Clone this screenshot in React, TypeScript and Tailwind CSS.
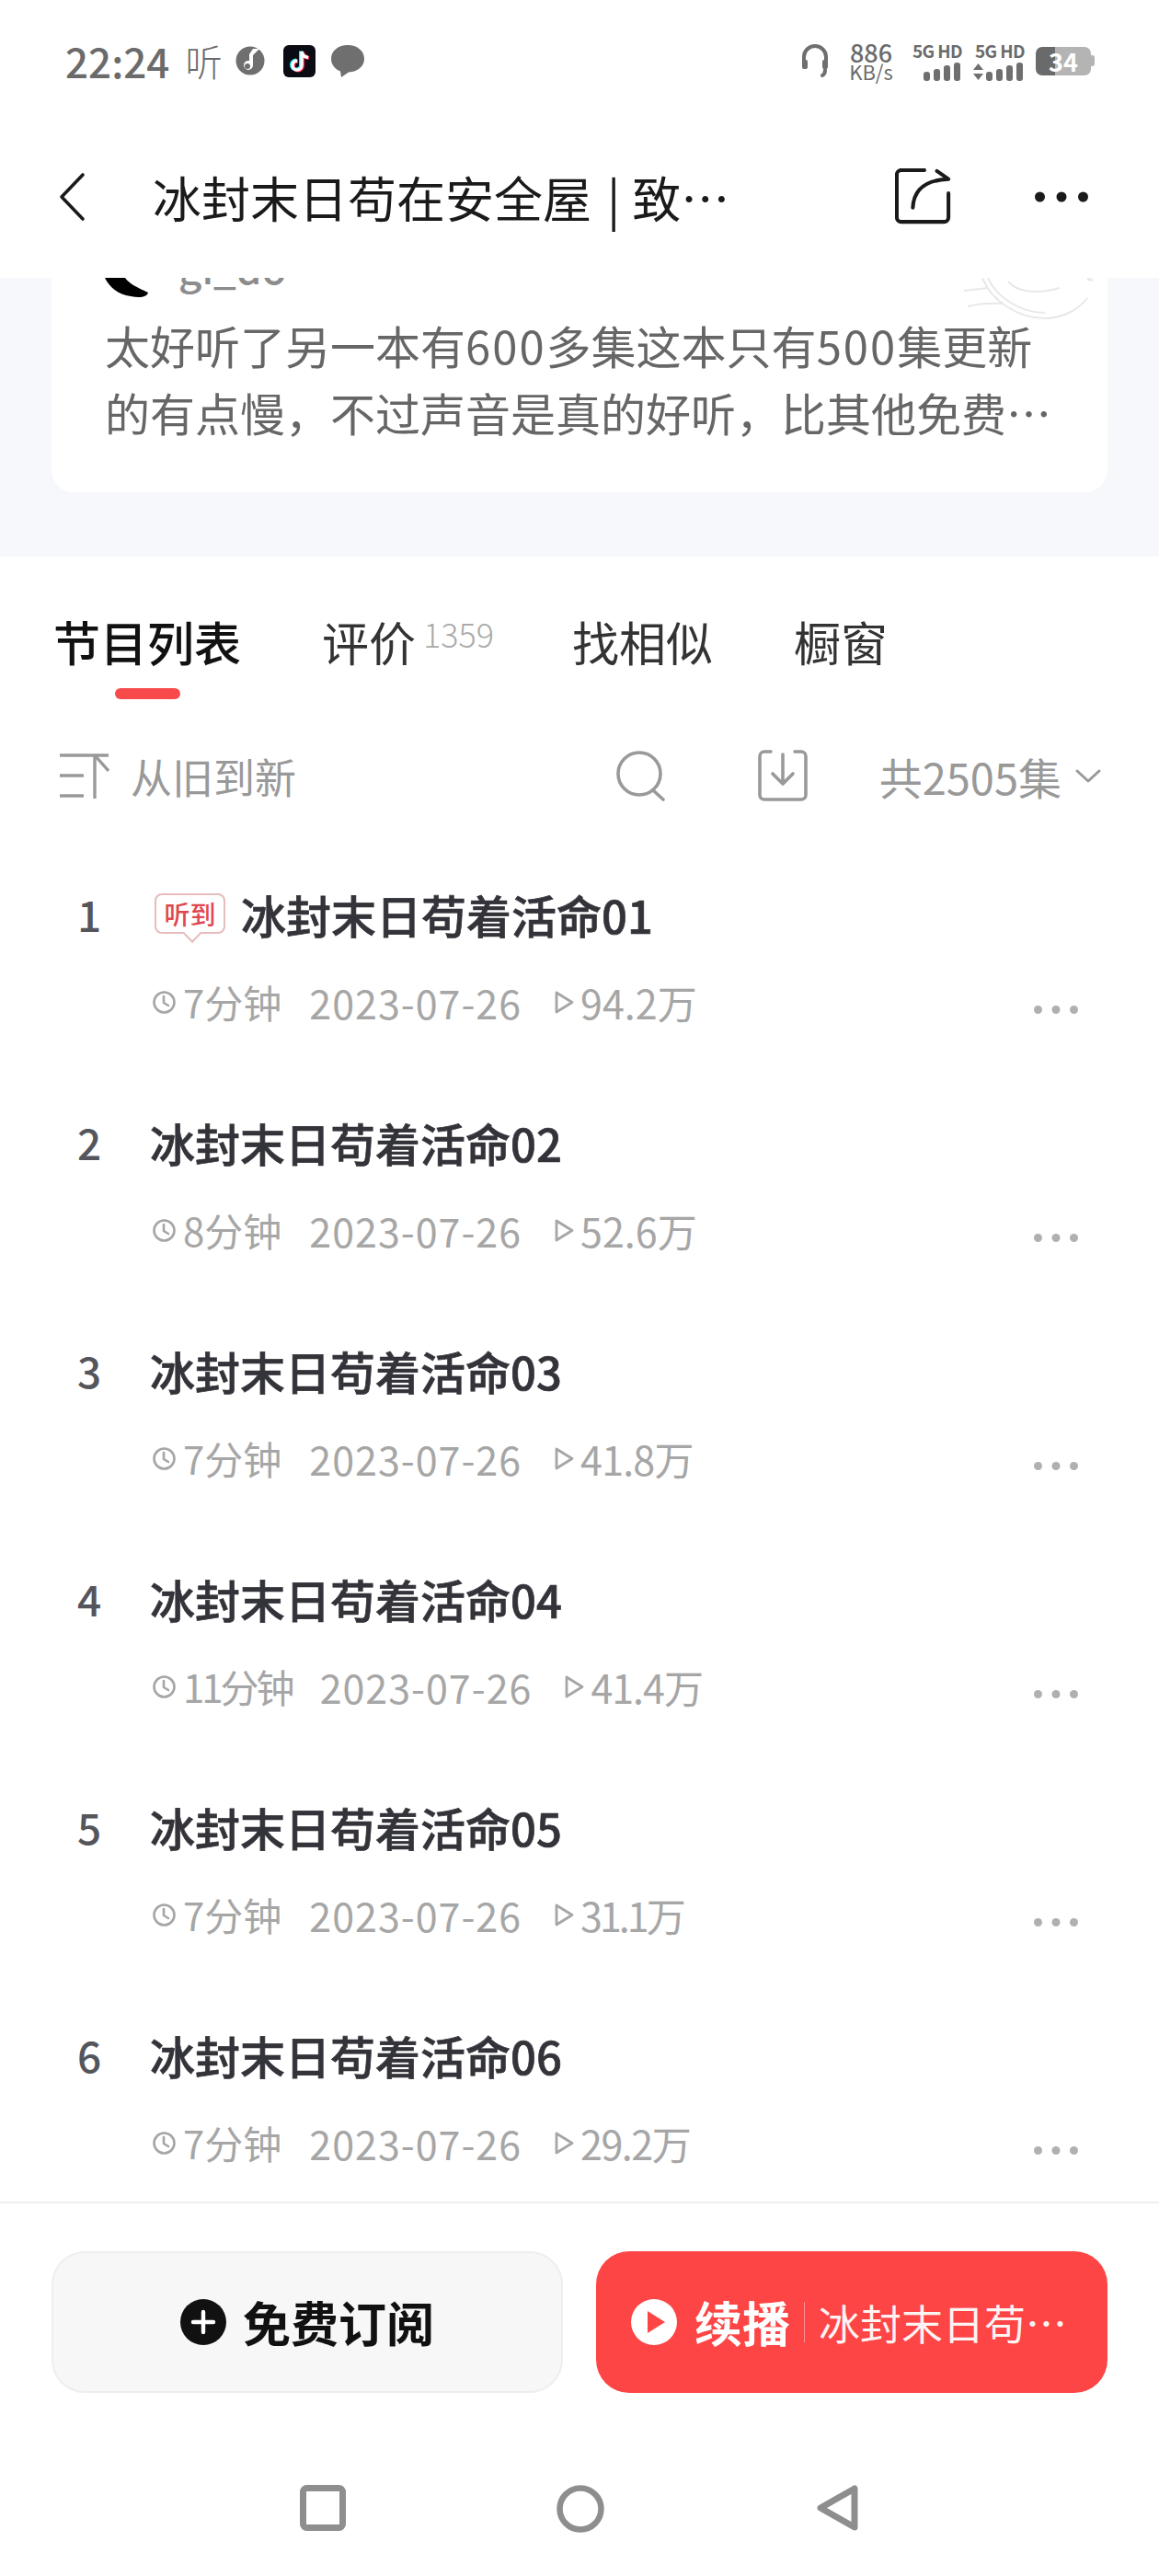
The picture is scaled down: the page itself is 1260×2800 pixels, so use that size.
import React from 'react';

const cjk = { fontFamily: '"Noto Sans CJK SC", "Noto Sans", sans-serif' };

const episodes = [
  { n: 1, title: '冰封末日苟着活命01', dur: '7分钟', durClass: '', plays: '94.2万', playsClass: '', heard: true },
  { n: 2, title: '冰封末日苟着活命02', dur: '8分钟', durClass: '', plays: '52.6万', playsClass: '' },
  { n: 3, title: '冰封末日苟着活命03', dur: '7分钟', durClass: '', plays: '41.8万', playsClass: 'tracking-[-0.8px]' },
  { n: 4, title: '冰封末日苟着活命04', dur: '11分钟', durClass: 'tracking-[-3px]', plays: '41.4万', playsClass: 'tracking-[-1px]' },
  { n: 5, title: '冰封末日苟着活命05', dur: '7分钟', durClass: '', plays: '31.1万', playsClass: 'tracking-[-3px]' },
  { n: 6, title: '冰封末日苟着活命06', dur: '7分钟', durClass: '', plays: '29.2万', playsClass: 'tracking-[-1.5px]' },
];

const SignalBars = () => (
  <svg width="40" height="20" viewBox="0 0 40 20" fill="#6f6f6f">
    <rect x="0" y="10" width="7" height="10" rx="3" />
    <rect x="11" y="7" width="7" height="13" rx="3" />
    <rect x="22" y="3" width="7" height="17" rx="3" />
    <rect x="33" y="0" width="7" height="20" rx="3" />
  </svg>
);

const StatusBar = () => (
  <div className="flex h-[132px] shrink-0 items-center justify-between pl-[71px] pr-[70px] text-[#6b6b6b]">
    <div className="flex items-center">
      <span className="text-[44px] font-medium leading-none">22:24</span>
      <span className="ml-[17px] text-[40px] font-light leading-none">听</span>
      <svg className="ml-[15px]" width="32" height="32" viewBox="0 0 32 32">
        <circle cx="16" cy="16" r="15.5" fill="#6f6f6f" />
        <path d="M19 3 L26 3 L19 10 L19 21 A5 5 0 1 1 15 16 L15 9 Z" fill="#fff" />
        <circle cx="13" cy="22" r="3" fill="#6f6f6f" />
      </svg>
      <svg className="ml-[20px]" width="35" height="35" viewBox="0 0 35 35">
        <rect width="35" height="35" rx="6" fill="#0b0b14" />
        <path d="M20 7 V22 A5 5 0 1 1 15 17 M20 7 C20.5 11 23 13 27 13.5" fill="none" stroke="#25f4ee" strokeWidth="4" transform="translate(-1 -0.5)" />
        <path d="M20 7 V22 A5 5 0 1 1 15 17 M20 7 C20.5 11 23 13 27 13.5" fill="none" stroke="#fe2c55" strokeWidth="4" transform="translate(1 0.5)" />
        <path d="M20 7 V22 A5 5 0 1 1 15 17 M20 7 C20.5 11 23 13 27 13.5" fill="none" stroke="#fff" strokeWidth="3.4" />
      </svg>
      <svg className="ml-[17px]" width="36" height="35" viewBox="0 0 36 35">
        <path d="M18 0 C28 0 36 6 36 15 C36 23 29 29 19 29.5 L11 35 L10 28.5 C4 26 0 21 0 15 C0 6 8 0 18 0 Z" fill="#6f6f6f" />
      </svg>
    </div>
    <div className="flex items-center">
      <svg width="30" height="36" viewBox="0 0 30 36" fill="none" stroke="#6f6f6f" strokeWidth="4" strokeLinecap="round">
        <path d="M3 19 V14 A12 12 0 0 1 27 14 V19" />
        <rect x="1" y="17" width="6" height="10" rx="2" fill="#6f6f6f" stroke="none" />
        <rect x="23" y="17" width="6" height="10" rx="2" fill="#6f6f6f" stroke="none" />
        <path d="M26 28 C26 31 25 33 23 34" />
      </svg>
      <div className="ml-[21px] flex w-[50px] flex-col items-center">
        <span className="text-[27px] font-medium leading-[23px]">886</span>
        <span className="text-[22px] leading-[19px]">KB/s</span>
      </div>
      <div className="ml-[16px] flex w-[58px] flex-col items-end">
        <span className="whitespace-nowrap text-[19px] font-bold leading-[20px] tracking-[-0.6px]">5G HD</span>
        <div className="mt-[3px] mr-[2px] flex"><SignalBars /></div>
      </div>
      <div className="ml-[10px] flex w-[58px] flex-col items-end">
        <span className="whitespace-nowrap text-[19px] font-bold leading-[20px] tracking-[-0.6px]">5G HD</span>
        <div className="mt-[3px] mr-[2px] flex items-center gap-[3px]">
          <svg width="11" height="18" viewBox="0 0 11 18" fill="#6f6f6f">
            <path d="M5.5 0 L11 7 H0 Z M5.5 18 L0 11 H11 Z" />
          </svg>
          <SignalBars />
        </div>
      </div>
      <div className="ml-[12px] flex items-center">
        <div className="flex h-[31px] w-[60px] items-center justify-center rounded-[7px] bg-[linear-gradient(90deg,#6a6a6a_0,#6a6a6a_35%,#b4b4b4_35%,#b4b4b4_100%)]">
          <span className="text-[27px] font-bold leading-[31px] text-white">34</span>
        </div>
        <div className="h-[12px] w-[4px] rounded-r-[3px] bg-[#b4b4b4]" />
      </div>
    </div>
  </div>
);

const Header = () => (
  <div className="flex h-[170px] shrink-0 items-center pb-[6px] pl-[62px] pr-[77px]">
    <svg width="32" height="54" viewBox="0 0 32 54" fill="none" stroke="#1a1a1a" strokeWidth="3.6" strokeLinecap="round" strokeLinejoin="round">
      <path d="M28 3 L5 27 L28 51" />
    </svg>
    <div className="ml-[72px] w-[640px] whitespace-nowrap text-[53px] leading-none text-[#1a1a1a]">
      冰封末日苟在安全屋<span className="ml-[17px] mr-[13px]">|</span>致<span className="tracking-[-6px]">…</span>
    </div>
    <div className="ml-auto flex items-center">
      <svg width="62" height="62" viewBox="0 0 64 64" fill="none" stroke="#1a1a1a" strokeWidth="4.2" strokeLinecap="round" strokeLinejoin="round">
        <path d="M33 2 H7 A5 5 0 0 0 2 7 V55 A5 5 0 0 0 7 60 H55 A5 5 0 0 0 60 55 V28" />
        <path d="M20 44 C21 24 34 13 60 12 L47 3" />
      </svg>
      <svg className="ml-[90px]" width="58" height="12" viewBox="0 0 58 12" fill="#1a1a1a">
        <circle cx="5.5" cy="6" r="5.5" />
        <circle cx="29" cy="6" r="5.5" />
        <circle cx="52.5" cy="6" r="5.5" />
      </svg>
    </div>
  </div>
);

const CommentCard = () => (
  <div className="h-[303px] shrink-0 bg-[#f7f8fc] px-[56px]">
    <div className="relative h-[233px] overflow-hidden rounded-b-[24px] bg-white px-[58px]">
      {/* watermark behind the comment, top right */}
      <svg className="absolute right-[16px] top-0" width="140" height="48" viewBox="0 0 140 48" fill="none" stroke="#e8e8e8" strokeWidth="2">
        <path d="M20 0 C30 26 60 44 88 44 C108 44 125 34 134 22" />
        <path d="M26 0 C36 22 62 38 88 38" />
        <path d="M48 4 C58 16 80 18 104 11" />
        <path d="M0 14 L26 11" />
        <path d="M4 31 C16 28 28 27 42 28" />
        <path d="M134 1 L146 4" strokeWidth="3" />
      </svg>
      <div className="flex h-[36px] items-start">
        <svg width="52" height="22" viewBox="0 0 52 22" fill="#000">
          <path d="M0 0 H22 C26 6 36 11 47 16 C46 21 38 22 28 20 C14 18 5 10 0 0 Z" />
        </svg>
        <span className="ml-[28px] -mt-[37px] text-[44px] font-medium leading-[50px] text-[#8c8c8c]">gi_do</span>
      </div>
      <p className="whitespace-nowrap text-[49px] leading-[73px] text-[#666]">
        太好听了另一本有<span className="tracking-[2px]">600</span>多集这本只有<span className="tracking-[2px]">500</span>集更新
      </p>
      <p className="whitespace-nowrap text-[49px] leading-[73px] text-[#666]">
        的有点慢，不过声音是真的好听，比其他免费…
      </p>
    </div>
  </div>
);

const Tabs = () => (
  <div className="flex h-[184px] shrink-0 items-center pl-[58px] text-[51px] leading-none text-[#333]">
    <div className="relative font-medium text-[#111]">
      节目列表
      <div className="absolute left-[67px] top-[76px] h-[12px] w-[71px] rounded-full bg-[#f84a4a]" />
    </div>
    <div className="ml-[88px] flex items-start">
      评价
      <span className="ml-[8px] -mt-[2px] text-[36px] font-light leading-none text-[#aaa]">1359</span>
    </div>
    <div className="ml-[85px]">找相似</div>
    <div className="ml-[88px]">橱窗</div>
  </div>
);

const FilterRow = () => (
  <div className="flex h-[108px] shrink-0 items-center pl-[65px] pr-[63px] text-[#999]">
    <svg width="54" height="50" viewBox="0 0 54 50" fill="none" stroke="#999" strokeWidth="3.4">
      <path d="M0 3 H53 M0 25 H26 M0 47 H26 M38 3 V50 M38 3 L53 20" />
    </svg>
    <span className="ml-[23px] text-[45px] leading-none">从旧到新</span>
    <svg className="ml-auto" width="56" height="56" viewBox="0 0 56 56" fill="none" stroke="#999" strokeWidth="3.6" strokeLinecap="round">
      <circle cx="26" cy="26" r="23" />
      <path d="M41 44 L52 54" />
    </svg>
    <svg className="ml-[99px]" width="54" height="56" viewBox="0 0 54 56" fill="none" stroke="#999" strokeWidth="3.6" strokeLinecap="round" strokeLinejoin="round">
      <path d="M14 2 H7 A5 5 0 0 0 2 7 V49 A5 5 0 0 0 7 54 H47 A5 5 0 0 0 52 49 V7 A5 5 0 0 0 47 2 H40" />
      <path d="M27 5 V36 M16 26 L27 37 L38 26" />
    </svg>
    <span className="ml-[78px] text-[47px] leading-none text-[#999]">共2505集</span>
    <svg className="ml-[15px]" width="28" height="15" viewBox="0 0 28 15" fill="none" stroke="#999" strokeWidth="3" strokeLinecap="round" strokeLinejoin="round">
      <path d="M2 2 L14 13 L26 2" />
    </svg>
  </div>
);

const Episode = ({ ep }: { ep: (typeof episodes)[number] }) => (
  <div className="h-[248px] shrink-0 px-[56px] pt-[45px]">
    <div className="flex h-[60px] items-center">
      <span className="w-[82px] text-center text-[46px] font-medium leading-none text-[#55555c]">{ep.n}</span>
      <div className="ml-[25px] flex items-center">
        {ep.heard && (
          <div className="relative mr-[17px] ml-[5px] flex h-[44px] w-[77px] items-center justify-center rounded-[8px] border-[2px] border-[#e6bcbc] bg-white">
            <span className="text-[28px] font-medium leading-none text-[#e0474f]">听到</span>
            <div className="absolute -bottom-[9px] left-[32px] h-[14px] w-[14px] rotate-45 border-b-[2px] border-r-[2px] border-[#e6bcbc] bg-white" />
          </div>
        )}
        <span className="text-[49px] font-medium leading-none text-[#33333a] [-webkit-text-stroke:0.7px_#33333a]">{ep.title}</span>
      </div>
    </div>
    <div className="mt-[36px] flex h-[60px] items-center pl-[110px] text-[#a6a6a6]">
      <svg width="25" height="25" viewBox="0 0 25 25" fill="none" stroke="#a6a6a6" strokeWidth="2.6" strokeLinecap="round" strokeLinejoin="round">
        <circle cx="12.5" cy="12.5" r="11" />
        <path d="M12 6 V13 L17 16" />
      </svg>
      <span className={`ml-[8px] text-[42px] leading-none ${ep.durClass}`}>{ep.dur}</span>
      <span className="ml-[30px] text-[43px] leading-none tracking-[1px]">2023-07-26</span>
      <svg className="ml-[36px]" width="21" height="25" viewBox="0 0 21 25" fill="none" stroke="#a6a6a6" strokeWidth="2.8" strokeLinejoin="round">
        <path d="M2 2 L19 12.5 L2 23 Z" />
      </svg>
      <span className={`ml-[7px] text-[43px] leading-none ${ep.playsClass}`}>{ep.plays}</span>
      <svg className="ml-auto mt-[16px] mr-[32px]" width="48" height="9" viewBox="0 0 48 9" fill="#b0b0b0">
        <circle cx="4.5" cy="4.5" r="4.5" />
        <circle cx="24" cy="4.5" r="4.5" />
        <circle cx="43.5" cy="4.5" r="4.5" />
      </svg>
    </div>
  </div>
);

const BottomBar = () => (
  <div className="flex h-[223px] shrink-0 gap-[36px] border-t-2 border-[#eeeeee] px-[56px] pt-[52px]">
    <div className="flex h-[154px] w-[556px] items-center justify-center rounded-[36px] border-2 border-[#eeeeee] bg-[#f7f7f7]">
      <svg width="50" height="50" viewBox="0 0 50 50">
        <circle cx="25" cy="25" r="25" fill="#111" />
        <path d="M25 14 V36 M14 25 H36" stroke="#fff" strokeWidth="4.4" strokeLinecap="round" />
      </svg>
      <span className="ml-[18px] text-[52px] font-bold leading-none text-[#111]">免费订阅</span>
    </div>
    <div className="flex h-[154px] w-[556px] items-center rounded-[36px] bg-[#fd4545] pl-[38px]">
      <svg width="50" height="50" viewBox="0 0 50 50">
        <circle cx="25" cy="25" r="25" fill="#fff" />
        <path d="M18 13 L37 25 L18 37 Z" fill="#fd4545" strokeLinejoin="round" />
      </svg>
      <span className="ml-[19px] text-[52px] font-bold leading-none text-white">续播</span>
      <div className="ml-[15px] h-[44px] w-px bg-white/40" />
      <span className="ml-[15px] whitespace-nowrap text-[45px] leading-none text-white/95">冰封末日苟…</span>
    </div>
  </div>
);

const NavBar = () => (
  <div className="flex h-[184px] shrink-0 items-start justify-center pt-[85px]">
    <svg width="50" height="50" viewBox="0 0 50 50" fill="none" stroke="#8e8e8e" strokeWidth="7">
      <rect x="3.5" y="3.5" width="43" height="43" rx="4" />
    </svg>
    <svg className="ml-[229px]" width="52" height="52" viewBox="0 0 52 52" fill="none" stroke="#8e8e8e" strokeWidth="6.5">
      <circle cx="26" cy="26" r="22.5" />
    </svg>
    <svg className="ml-[231px]" width="46" height="50" viewBox="0 0 46 50" fill="none" stroke="#8e8e8e" strokeWidth="7" strokeLinejoin="round">
      <path d="M41 4 V46 L4 25 Z" />
    </svg>
  </div>
);

export default function App() {
  return (
    <div className="flex h-[2800px] w-[1260px] flex-col overflow-hidden bg-white" style={cjk}>
      <StatusBar />
      <Header />
      <div className="flex min-h-0 flex-1 flex-col overflow-hidden">
        <CommentCard />
        <Tabs />
        <FilterRow />
        <div className="pt-[21px]">
          {episodes.map((ep) => (
            <Episode key={ep.n} ep={ep} />
          ))}
        </div>
      </div>
      <BottomBar />
      <NavBar />
    </div>
  );
}
